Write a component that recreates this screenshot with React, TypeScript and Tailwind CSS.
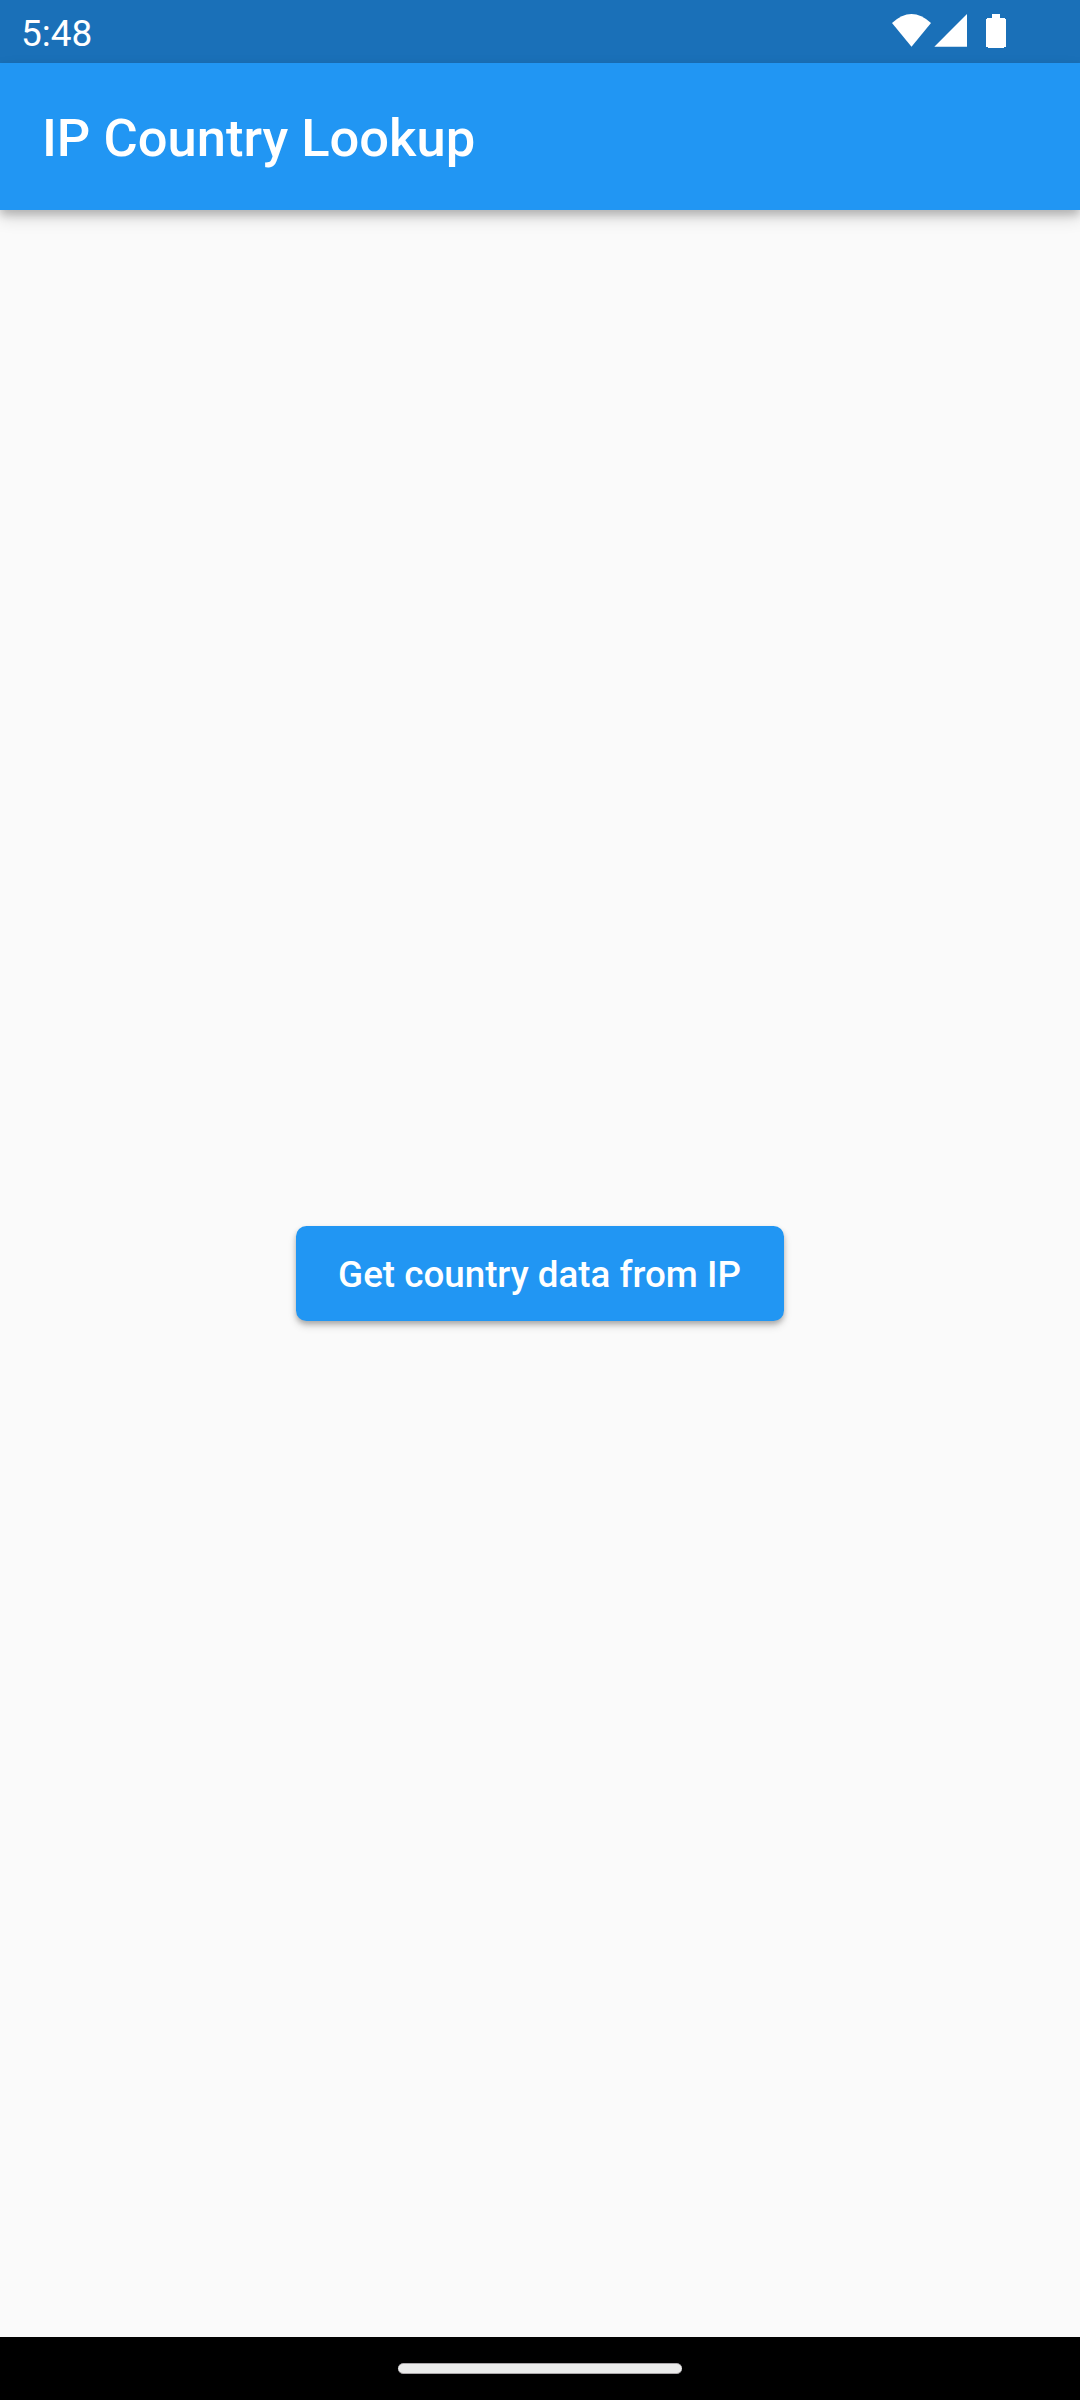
export default function App() {
  return (
    <div className="flex h-[2400px] w-[1080px] flex-col overflow-hidden bg-[#fafafa] font-['Roboto',sans-serif] text-white">
      <div className="flex h-[63px] shrink-0 items-center justify-between bg-[#1a70b8] pl-[21px] pr-[72px]">
        <span className="pt-[3px] text-[37px] leading-none">5:48</span>
        <svg className="h-[63px] w-[120px]" viewBox="888 0 120 63" fill="#fff">
          <path d="M892 23 Q911.5 5 931 23 L911.5 46.7 Z" />
          <path d="M967 14 V46.7 H934.3 Z" />
          <path d="M992 14h8v4h5v1h1v28h-2v1h-16v-1h-2V19h1v-1h5z" />
        </svg>
      </div>
      <header className="z-10 flex h-[147px] shrink-0 items-center bg-[#2196f3] pl-[42px] pt-[4px] shadow-[0_5px_8px_rgba(0,0,0,0.18),0_8px_16px_rgba(0,0,0,0.14)]">
        <h1 className="text-[52.5px] font-medium leading-none">IP Country Lookup</h1>
      </header>
      <main className="flex flex-1 items-center justify-center">
        <button className="h-[94.5px] w-[488px] rounded-[10.5px] bg-[#2196f3] pr-[1px] pt-[2px] text-[36.75px] font-medium shadow-[0_3px_5px_rgba(0,0,0,0.22),0_5px_9px_rgba(0,0,0,0.14)]">Get country data from IP</button>
      </main>
      <footer className="flex h-[63px] shrink-0 items-center justify-center bg-black">
        <div className="h-[11px] w-[284px] rounded-full border-y border-[#aaa6a9] bg-[#ebebeb]" />
      </footer>
    </div>
  );
}
